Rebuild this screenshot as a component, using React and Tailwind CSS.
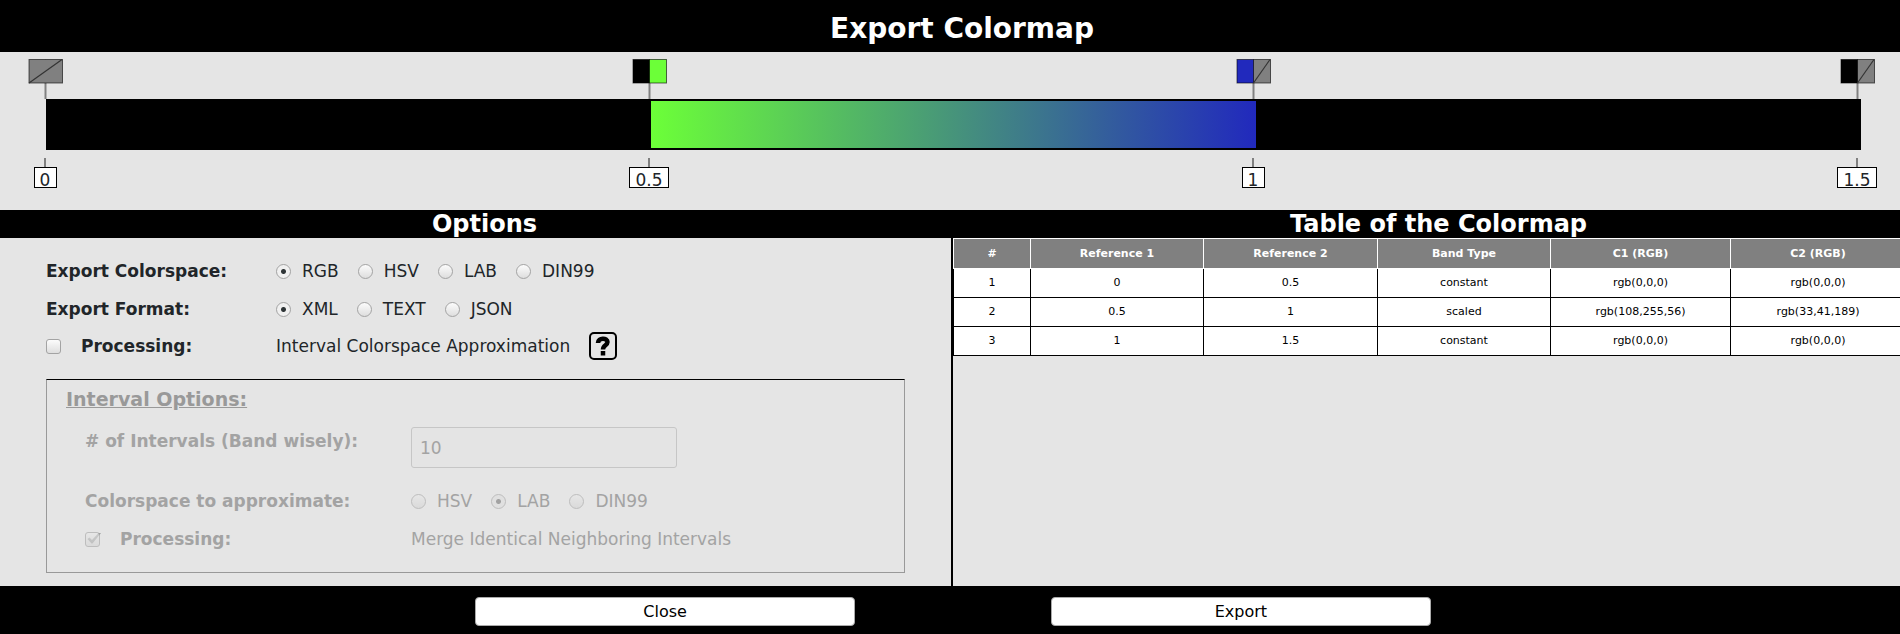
import React from "react";

const markers = [
  { label: "0", left: null, right: null },
  { label: "0.5", left: "#000000", right: "#6cff38" },
  { label: "1", left: "#2129bd", right: null },
  { label: "1.5", left: "#000000", right: null },
];

const rows = [
  ["1", "0", "0.5", "constant", "rgb(0,0,0)", "rgb(0,0,0)"],
  ["2", "0.5", "1", "scaled", "rgb(108,255,56)", "rgb(33,41,189)"],
  ["3", "1", "1.5", "constant", "rgb(0,0,0)", "rgb(0,0,0)"],
];

const columns = [
  ["#", "w-[77px]"],
  ["Reference 1", "w-[173px]"],
  ["Reference 2", "w-[174px]"],
  ["Band Type", "w-[173px]"],
  ["C1 (RGB)", "w-[180px]"],
  ["C2 (RGB)", ""],
];

function Handle({ left, right }) {
  const whole = !left && !right;
  return (
    <svg className="block h-10 w-10" viewBox="0 0 40 40" aria-hidden="true">
      <path d="M20.5 24V40" stroke="#808080" strokeWidth="2" />
      <rect x="4" y="0.5" width="17" height="23.5" fill={left || "#808080"} />
      <rect x="20.5" y="0.5" width="17" height="23.5" fill={right || "#808080"} />
      <rect x="4" y="0.5" width="33.5" height="23.5" fill="none" stroke="#000" strokeOpacity="0.6" />
      {!whole && <path d="M20.5 0.5V24" stroke="#000" strokeOpacity="0.6" />}
      {!right && <path d={whole ? "M4 24L37 0.5" : "M20.5 24L37 0.5"} stroke="#333" strokeWidth="1.2" />}
    </svg>
  );
}

function Radio({ name, label, checked, disabled }) {
  return (
    <label className="flex items-center gap-[11px]">
      <input
        type="radio"
        name={name}
        defaultChecked={checked}
        disabled={disabled}
        className="size-[15px] shrink-0 appearance-none rounded-full border border-[#a3a3a3] bg-linear-to-b from-[#fcfcfc] to-[#dedede] checked:bg-[radial-gradient(circle,#2e3436_0,#2e3436_2px,#f0f0f0_3px)] disabled:from-[#e8e8e8] disabled:to-[#d4d4d4] disabled:opacity-60 disabled:checked:bg-[radial-gradient(circle,#777_0,#777_2px,#dedede_3px)]"
      />
      <span>{label}</span>
    </label>
  );
}

function Check({ id, checked, disabled }) {
  return (
    <span className="grid size-[15px] shrink-0">
      <input
        id={id}
        type="checkbox"
        defaultChecked={checked}
        disabled={disabled}
        className="peer col-start-1 row-start-1 size-[15px] appearance-none rounded-[3px] border border-[#a3a3a3] bg-linear-to-b from-[#fcfcfc] to-[#dedede] disabled:from-[#e8e8e8] disabled:to-[#d4d4d4] disabled:opacity-60"
      />
      <svg
        viewBox="0 0 15 15"
        className="pointer-events-none invisible col-start-1 row-start-1 overflow-visible peer-checked:visible"
        fill="#9d9f9f"
        aria-hidden="true"
      >
        <path d="M2.5 7L4.5 5.5L7 8L13.5 1H16L7.5 11.5H6.5Z" />
      </svg>
    </span>
  );
}

export default function App() {
  return (
    <div className="flex min-h-screen flex-col bg-black font-['DejaVu_Sans',sans-serif] text-[17px] leading-6 text-[#212529]">
      <header className="flex h-[52px] items-center justify-center pt-1.5 pl-6">
        <h1 className="text-[28px] leading-8 font-bold text-white">Export Colormap</h1>
      </header>

      <section className="h-[158px] bg-[#e5e5e5] pt-[7px]">
        <div className="flex justify-between pr-[23px] pl-[25px]">
          {markers.map((m) => (
            <Handle key={m.label} left={m.left} right={m.right} />
          ))}
        </div>
        <div className="mr-[39px] ml-[46px] grid h-[51px] grid-cols-3 bg-black py-[2px]">
          <div className="col-start-2 bg-linear-to-r/srgb from-[#6cff38] to-[#2129bd]" />
        </div>
        <div className="flex justify-between pt-2 pr-[23px] pl-[25px]">
          {markers.map((m) => (
            <div key={m.label} className="flex w-10 flex-col items-center">
              <span className="h-[9px] w-[2px] bg-[#808080]" />
              <span className="flex h-[21px] min-w-[23px] items-center justify-center overflow-hidden border border-black bg-white px-[5px] pt-1">
                {m.label}
              </span>
            </div>
          ))}
        </div>
      </section>

      <div className="grid grow grid-cols-[953fr_947fr] grid-rows-[28px_1fr]">
        <h2 className="pl-4 text-center text-2xl leading-7 font-bold text-white">Options</h2>
        <h2 className="pl-6 text-center text-2xl leading-7 font-bold text-white">Table of the Colormap</h2>

        <section className="border-r-2 border-black bg-[#e5e5e5] px-[46px] pt-[14px]">
          <div className="flex h-[38px] items-center">
            <span className="w-[230px] font-bold">Export Colorspace:</span>
            <div className="flex gap-[19px]">
              <Radio name="space" label="RGB" checked />
              <Radio name="space" label="HSV" />
              <Radio name="space" label="LAB" />
              <Radio name="space" label="DIN99" />
            </div>
          </div>
          <div className="flex h-[38px] items-center">
            <span className="w-[230px] font-bold">Export Format:</span>
            <div className="flex gap-[19px]">
              <Radio name="format" label="XML" checked />
              <Radio name="format" label="TEXT" />
              <Radio name="format" label="JSON" />
            </div>
          </div>
          <div className="flex h-9 items-center">
            <label htmlFor="approx" className="flex w-[230px] items-center gap-5 font-bold">
              <Check id="approx" />
              Processing:
            </label>
            <span>Interval Colorspace Approximation</span>
            <button
              type="button"
              aria-label="Help"
              className="ml-[19px] flex h-7 w-7 items-center justify-center rounded-[5px] border-2 border-black text-black"
            >
              <svg viewBox="0 0 24 24" className="size-6" fill="none" stroke="currentColor" aria-hidden="true">
                <path d="M7 9C7 3.5 16.5 3.5 16.5 8C16.5 11.5 12 11 12 15.5" strokeWidth="4.5" />
                <path d="M12 17V21.5" strokeWidth="4.5" />
              </svg>
            </button>
          </div>

          <fieldset
            disabled
            className="mt-[15px] h-[194px] border border-t-black border-r-[#999] border-b-[#999] border-l-[#999] pt-[5px] pl-[19px] text-[#a3a3a3]"
          >
            <h3 className="text-[19px] leading-7 font-bold text-[#999] underline">Interval Options:</h3>
            <div className="flex h-[66px] items-start pt-[14px] pl-[19px]">
              <label htmlFor="intervals" className="w-[326px] leading-7 font-bold">
                # of Intervals (Band wisely):
              </label>
              <input
                id="intervals"
                type="text"
                defaultValue="10"
                disabled
                className="h-[41px] w-[266px] rounded-[3px] border border-[#c6c6c6] bg-[#e4e4e4] px-2"
              />
            </div>
            <div className="mt-[3px] flex h-[38px] items-center pl-[19px]">
              <span className="w-[326px] font-bold">Colorspace to approximate:</span>
              <div className="flex gap-[19px]">
                <Radio name="target" label="HSV" disabled />
                <Radio name="target" label="LAB" checked disabled />
                <Radio name="target" label="DIN99" disabled />
              </div>
            </div>
            <div className="flex h-[38px] items-center pl-[19px]">
              <label htmlFor="merge" className="flex w-[326px] items-center gap-5 font-bold">
                <Check id="merge" checked disabled />
                Processing:
              </label>
              <span>Merge Identical Neighboring Intervals</span>
            </div>
          </fieldset>
        </section>

        <section className="min-w-0 overflow-hidden bg-[#e5e5e5]">
          <table className="w-[calc(100%+6px)] table-fixed border-collapse text-center text-[11px] leading-4 text-black">
            <thead>
              <tr className="h-[30px] bg-[#808080] text-white">
                {columns.map(([name, width]) => (
                  <th key={name} className={`${width} border border-white font-bold`}>
                    {name}
                  </th>
                ))}
              </tr>
            </thead>
            <tbody>
              {rows.map((r) => (
                <tr key={r[0]} className="h-[29px] bg-white">
                  {r.map((c, i) => (
                    <td key={i} className="border border-black">
                      {c}
                    </td>
                  ))}
                </tr>
              ))}
            </tbody>
          </table>
        </section>
      </div>

      <footer className="flex h-12 items-center justify-center gap-[10.3%] pt-[3px] pl-1.5">
        <button type="button" className="h-[29px] w-[20.1%] rounded-[4px] border border-[#aaa] bg-white text-base leading-6 text-black">
          Close
        </button>
        <button type="button" className="h-[29px] w-[20.1%] rounded-[4px] border border-[#aaa] bg-white text-base leading-6 text-black">
          Export
        </button>
      </footer>
    </div>
  );
}
